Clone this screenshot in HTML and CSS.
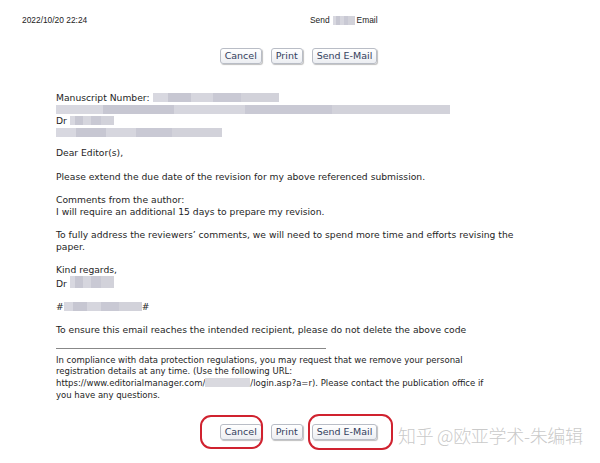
FILE: index.html
```html
<!DOCTYPE html>
<html>
<head>
<meta charset="utf-8">
<link rel="stylesheet" href="styles.css">
</head>
<body>
<div class="page">
  <header class="top">
    <span class="date">2022/10/20 22:24</span>
    <span class="title">Send <span class="blur b-title"></span> Email</span>
  </header>

  <div class="actions">
    <button class="btn">Cancel</button>
    <button class="btn">Print</button>
    <button class="btn">Send E-Mail</button>
  </div>

  <div class="letter">
    <p class="head">Manuscript Number: <span class="blur b1"></span><br>
    <span class="blur b2"></span><br>
    Dr <span class="blur b3"></span><br>
    <span class="blur b4"></span></p>

    <p>Dear Editor(s),</p>
    <p>Please extend the due date of the revision for my above referenced submission.</p>
    <p>Comments from the author:<br>
    I will require an additional 15 days to prepare my revision.</p>
    <p>To fully address the reviewers’ comments, we will need to spend more time and efforts revising the paper.</p>
    <p>Kind regards,<br>Dr <span class="blur b5"></span></p>
    <p>#<span class="blur b6"></span>#</p>
    <p>To ensure this email reaches the intended recipient, please do not delete the above code</p>
    <div class="rule"></div>
    <p class="footer">In compliance with data protection regulations, you may request that we remove your personal<br>registration details at any time. (Use the following URL:<br><span class="url">https://www.editorialmanager.com/<span class="blur b7"></span>/login.asp?a=r).</span> Please contact the publication office if<br>you have any questions.</p>
  </div>

  <div class="actions bottom">
    <button class="btn">Cancel</button>
    <button class="btn">Print</button>
    <button class="btn">Send E-Mail</button>
    <span class="ring ring-cancel"></span>
    <span class="ring ring-send"></span>
    <span class="watermark">知乎 @欧亚学术-朱编辑</span>
  </div>
</div>
</body>
</html>
```

FILE: styles.css
```css
html, body {
  margin: 0;
  padding: 0;
  background: #fff;
}
.page {
  width: 600px;
  height: 463px;
  position: relative;
  overflow: hidden;
  font-family: "DejaVu Sans", Verdana, sans-serif;
  color: #1e1e1e;
}
.top {
  display: flex;
  height: 14px;
  padding: 13px 0 0 22px;
  font-family: "Liberation Sans", Arial, sans-serif;
  font-size: 8.4px;
  color: #222;
  line-height: 14px;
}
.date {
  width: 288px;
}
.title {
  display: flex;
  align-items: center;
}
.b-title {
  display: inline-block;
  width: 22px;
  height: 14px;
  margin: 0 2px 0 3px;
  background: #e3e3e6;
}
.actions {
  display: flex;
  justify-content: center;
  gap: 9px;
  margin-top: 21px;
  padding-right: 3px;
}
.btn {
  font-family: "DejaVu Sans", Verdana, sans-serif;
  font-size: 9.5px;
  color: #33405c;
  height: 16px;
  padding: 0 4px;
  line-height: 14px;
  background: linear-gradient(#ffffff, #eceef2);
  border: 1px solid #b9bdc6;
  border-radius: 3px;
  box-shadow: 1px 1px 1px rgba(0,0,0,0.25);
}
.letter {
  margin-top: 28px;
  padding-left: 56px;
  width: 462px;
  font-size: 9.2px;
  line-height: 11.7px;
}
.letter p {
  margin: 0 0 11.6px 0;
}
.letter p.head {
  margin-bottom: 8.5px;
}
.blur {
  display: inline-block;
  height: 9px;
  vertical-align: -1px;
  background: linear-gradient(90deg, #d8d8e0 0 12%, #c7c7d2 12% 30%, #d6d6de 30% 48%, #c9c9d4 48% 70%, #d2d2da 70% 100%);
}
.b1 { width: 126px; }
.b2 { width: 394px; }
.b3 { width: 44px; }
.b4 { width: 166px; }
.b5 { width: 44px; height: 12px; }
.b6 { width: 78px; }
.b7 { width: 45px; background: #d9d9df; }
.url {
  white-space: nowrap;
}
.rule {
  width: 270px;
  height: 1px;
  background: #888;
  margin: 10px 0 6px 0;
}
.letter p.footer {
  margin: 0;
  font-size: 8.5px;
}
.bottom {
  margin-top: 23px;
  position: relative;
}
.ring {
  position: absolute;
  border: 2px solid #d0222f;
  border-radius: 11px;
}
.ring-cancel {
  left: 200px;
  top: -9px;
  width: 59px;
  height: 30px;
}
.ring-send {
  left: 308px;
  top: -10px;
  width: 81px;
  height: 32px;
}
.watermark {
  position: absolute;
  left: 398px;
  top: 1px;
  font-family: "Noto Sans CJK SC", sans-serif;
  font-size: 18px;
  line-height: 20px;
  color: rgba(195,195,195,0.9);
  letter-spacing: -0.3px;
  font-weight: 300;
}
```
